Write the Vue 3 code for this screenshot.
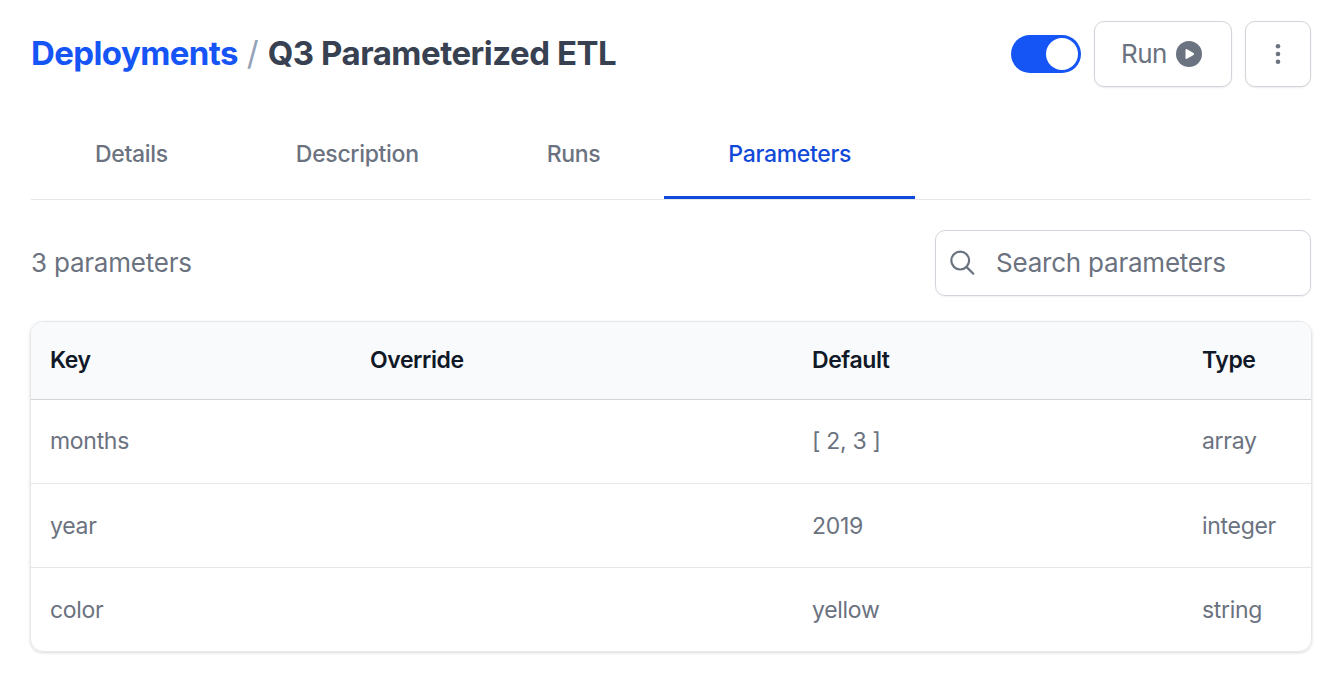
<script setup>
const tabs = ['Details', 'Description', 'Runs', 'Parameters']
const rows = [
  ['months', '', '[ 2, 3 ]', 'array'],
  ['year', '', '2019', 'integer'],
  ['color', '', 'yellow', 'string'],
]
</script>

<template>
  <main class="page">
    <header class="header">
      <h1 class="title"><a class="link">Deployments</a><span class="slash">/</span><span class="current">Q3 Parameterized ETL</span></h1>
      <div class="actions">
        <div class="toggle"><span class="knob"></span></div>
        <button class="btn run"><span>Run</span>
          <svg width="26" height="26" viewBox="0 0 26 26"><circle cx="13" cy="13" r="13" fill="#6b7280" /><path d="M9.5 9.1v7.8a1 1 0 0 0 1.5.9l6.5-3.9a1 1 0 0 0 0-1.8L11 8.2a1 1 0 0 0-1.5.9z" fill="#fff" /></svg>
        </button>
        <button class="btn more">
          <svg width="6" height="22" viewBox="0 0 6 22" fill="#6b7280"><circle cx="3" cy="3.3" r="2.3" /><circle cx="3" cy="11" r="2.3" /><circle cx="3" cy="18.7" r="2.3" /></svg>
        </button>
      </div>
    </header>
    <nav class="tabs">
      <a v-for="t in tabs" :key="t" class="tab" :class="{ active: t === 'Parameters' }">{{ t }}</a>
    </nav>
    <div class="toolbar">
      <span class="count">3 parameters</span>
      <label class="search">
        <svg width="28" height="28" viewBox="0 0 28 28" fill="none" stroke="#6b7280" stroke-width="2.2" stroke-linecap="round"><circle cx="11.2" cy="11.6" r="8.9" /><path d="M17.7 18.1L24.3 24.7" /></svg>
        <span class="placeholder">Search parameters</span>
      </label>
    </div>
    <section class="table">
      <div class="row head"><span>Key</span><span>Override</span><span>Default</span><span>Type</span></div>
      <div v-for="r in rows" :key="r[0]" class="row"><span v-for="(c, i) in r" :key="i">{{ c }}</span></div>
    </section>
  </main>
</template>

<style>
body { background: #fff; }
</style>

<style scoped>
* { box-sizing: border-box; }
.page { width: 1336px; height: 698px; padding: 21px 25px 0 31px; font-family: Inter, sans-serif; color: #6b7280; overflow: hidden; }
.header { display: flex; justify-content: space-between; height: 66px; align-items: center; }
.title { margin: 0; padding-bottom: 2px; font-size: 33px; line-height: 40px; font-weight: 750; color: #374151; display: flex; letter-spacing: -0.6px; white-space: nowrap; font-optical-sizing: none; }
.link { color: #1554f5; }
.slash { color: #94a3b8; font-weight: 400; margin: 0 9.6px 0 9px; }
.current { letter-spacing: -0.48px; }
.actions { display: flex; align-items: center; }
.toggle { width: 70px; height: 38px; border-radius: 19px; background: #1554f5; padding: 3px; display: flex; justify-content: flex-end; margin-right: 13px; }
.knob { width: 32px; height: 32px; border-radius: 50%; background: #fff; }
.btn { height: 66px; border: 1px solid #d1d5db; border-radius: 10px; background: #fff; box-shadow: 0 1px 2px rgba(0,0,0,.08); color: #6b7280; font: 400 26px Inter, sans-serif; letter-spacing: -0.5px; display: flex; align-items: center; justify-content: center; padding: 0; }
.run { width: 138px; gap: 9px; margin-right: 13px; padding-right: 3px; }
.run span { padding-bottom: 2px; }
.more { width: 66px; }
.tabs { display: flex; height: 113px; padding-top: 22px; border-bottom: 1px solid #e5e7eb; }
.tab { padding: 0 64px; line-height: 90px; font-size: 23px; font-weight: 500; height: 90px; letter-spacing: -0.32px; }
.active { color: #1149d8; border-bottom: 3px solid #1149d8; }
.toolbar { display: flex; justify-content: space-between; align-items: center; height: 66px; margin-top: 30px; font-size: 26px; letter-spacing: -0.22px; }
.count, .placeholder { padding-bottom: 2px; }
.search { width: 376px; height: 66px; border: 1px solid #d1d5db; border-radius: 10px; display: flex; align-items: center; padding-left: 13px; gap: 19px; box-shadow: 0 1px 2px rgba(0,0,0,.06); }
.table { margin: 25px -1px 0; width: 1282px; height: 331px; border: 1px solid #e5e7eb; border-radius: 13px; overflow: hidden; box-shadow: 0 1px 3px rgba(0,0,0,.15); }
.row { display: grid; grid-template-columns: 320px 442px 390px 1fr; padding-left: 19px; height: 84px; align-items: center; font-size: 23px; border-bottom: 1px solid #e5e7eb; letter-spacing: -0.3px; }
.head { height: 78px; background: #f8fafc; color: #111827; font-weight: 600; border-color: #d1d5db; letter-spacing: -0.42px; }
.head, .head + .row { padding-bottom: 2px; }
.row:last-child { border-bottom: 0; }
</style>
